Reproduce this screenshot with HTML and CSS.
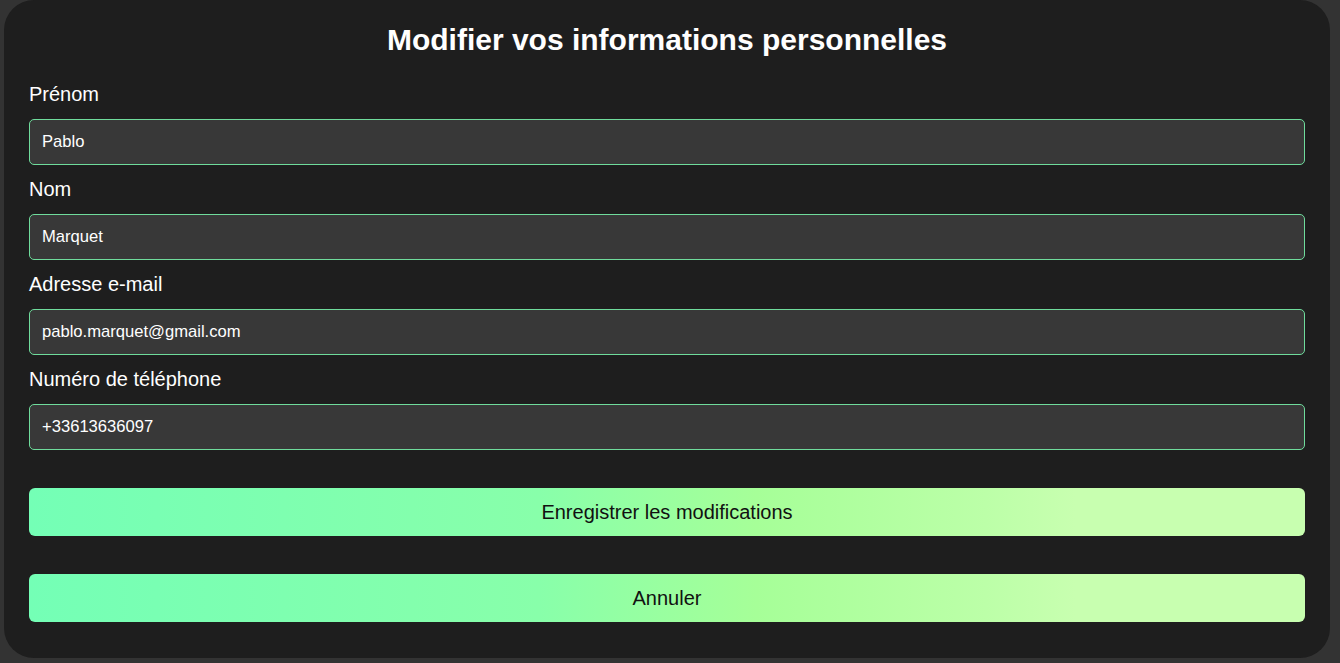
FILE: index.html
```html
<!DOCTYPE html>
<html lang="fr">
<head>
<meta charset="utf-8">
<title>Modifier vos informations personnelles</title>
<link rel="stylesheet" href="styles.css">
</head>
<body>
<main class="card">
  <h1 class="title">Modifier vos informations personnelles</h1>
  <form class="form">
    <div class="field">
      <label class="label" for="prenom">Prénom</label>
      <input class="input" id="prenom" type="text" value="Pablo">
    </div>
    <div class="field">
      <label class="label" for="nom">Nom</label>
      <input class="input" id="nom" type="text" value="Marquet">
    </div>
    <div class="field">
      <label class="label" for="email">Adresse e-mail</label>
      <input class="input" id="email" type="email" value="pablo.marquet@gmail.com">
    </div>
    <div class="field">
      <label class="label" for="tel">Numéro de téléphone</label>
      <input class="input" id="tel" type="tel" value="+33613636097">
    </div>
    <div class="actions">
      <button class="btn" type="submit">Enregistrer les modifications</button>
      <button class="btn" type="button">Annuler</button>
    </div>
  </form>
</main>
</body>
</html>
```
FILE: styles.css
```css
html, body {
  margin: 0;
  padding: 0;
  background: #333333;
  height: 100%;
}
body {
  font-family: "Liberation Sans", Arial, sans-serif;
  color: #ffffff;
  padding: 0 10px 0 4px;
  box-sizing: border-box;
}
.card {
  background: #1e1e1e;
  border-radius: 30px;
  height: 658px;
  box-sizing: border-box;
  padding: 22px 25px 0 25px;
}
.title {
  margin: 0;
  text-align: center;
  font-size: 30px;
  font-weight: bold;
  line-height: 36px;
}
.form {
  display: flex;
  flex-direction: column;
  margin-top: 21px;
}
.field {
  display: flex;
  flex-direction: column;
  margin-bottom: 9px;
}
.label {
  font-size: 20px;
  line-height: 22px;
  height: 40px;
  padding-top: 4px;
  box-sizing: border-box;
}
.input {
  height: 46px;
  box-sizing: border-box;
  background: #383838;
  border: 1px solid #6fdc9c;
  border-radius: 5px;
  color: #ffffff;
  font-family: "Liberation Sans", Arial, sans-serif;
  font-size: 16.6px;
  padding: 0 12px;
  outline: none;
}
.actions {
  display: flex;
  flex-direction: column;
  gap: 38px;
  margin-top: 29px;
}
.btn {
  height: 48px;
  border: none;
  border-radius: 6px;
  background: linear-gradient(90deg, #74ffb6 0%, #88ffaa 40%, #a6ff98 57%, #bcffa8 75%, #c8ffb0 82%, #c8ffb0 100%);
  color: #111111;
  font-family: "Liberation Sans", Arial, sans-serif;
  font-size: 20px;
  cursor: pointer;
}
```
